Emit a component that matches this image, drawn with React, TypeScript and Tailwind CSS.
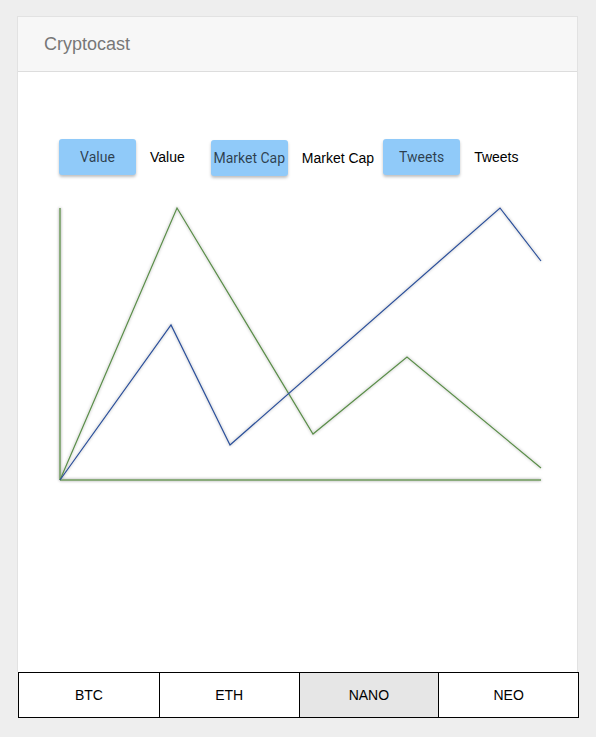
import React from 'react'

const tabs = ['BTC', 'ETH', 'NANO', 'NEO']

function ToggleButton({ label }: { label: string }) {
  return (
    <button className="w-[77px] h-[36px] rounded-[3px] bg-[#90caf9] text-[14px] text-[rgba(0,0,0,0.7)] shadow-[0_2px_3px_rgba(0,0,0,0.25)] font-['Roboto',sans-serif]">
      {label}
    </button>
  )
}

function Chart() {
  const green = '60,480 177,208 313,434 407,357 541,468'
  const blue = '60,480 171,325 230,445 500,208 541,261'
  return (
    <svg width="561" height="300" viewBox="17 195 561 300" className="block">
      <defs>
        <filter id="glow" x="-10%" y="-10%" width="120%" height="120%">
          <feDropShadow dx="0" dy="0" stdDeviation="1.4" floodColor="#000" floodOpacity="0.35" />
        </filter>
      </defs>
      <g filter="url(#glow)" fill="none">
        <line x1="60" y1="208" x2="60" y2="480" stroke="#8aab7c" strokeWidth="2" />
        <line x1="60" y1="480" x2="541" y2="480" stroke="#8aab7c" strokeWidth="2" />
        <polyline points={green} stroke="#5b8d4a" strokeWidth="1.2" />
        <polyline points={blue} stroke="#2b4f99" strokeWidth="1.2" />
      </g>
    </svg>
  )
}

export default function App() {
  return (
    <div className="min-h-[737px] w-[596px] bg-[#eeeeee] pt-[16px] pl-[17px]">
      <div className="w-[561px] border border-[#e2e2e2] border-b-0 bg-white">
        <div className="h-[55px] bg-[#f7f7f7] border-b border-[#dddddd] flex items-center px-[26px]">
          <span className="text-[18px] text-[#777777] font-['Liberation_Sans',Arial,sans-serif]">Cryptocast</span>
        </div>
        <div className="h-[600px] flex flex-col">
          <div className="flex items-center mt-[66px] pl-[41px] text-[14px] font-['Liberation_Sans',Arial,sans-serif] text-black">
            <ToggleButton label="Value" />
            <span className="ml-[14px]">Value</span>
            <div className="ml-[26px] mt-[2px]"><ToggleButton label="Market Cap" /></div>
            <span className="ml-[14px] mt-[2px]">Market Cap</span>
            <div className="ml-[9px]"><ToggleButton label="Tweets" /></div>
            <span className="ml-[14px]">Tweets</span>
          </div>
          <div className="mt-[19px] -ml-px">
            <Chart />
          </div>
        </div>
      </div>
      <div className="w-[561px] ml-px grid grid-cols-4 border border-black font-['Liberation_Sans',Arial,sans-serif] text-[14px] text-black">
        {tabs.map((t, i) => (
          <div
            key={t}
            className={`h-[44px] flex items-center justify-center ${i > 0 ? 'border-l border-black' : ''} ${t === 'NANO' ? 'bg-[#e6e6e6]' : 'bg-white'}`}
          >
            {t}
          </div>
        ))}
      </div>
    </div>
  )
}
